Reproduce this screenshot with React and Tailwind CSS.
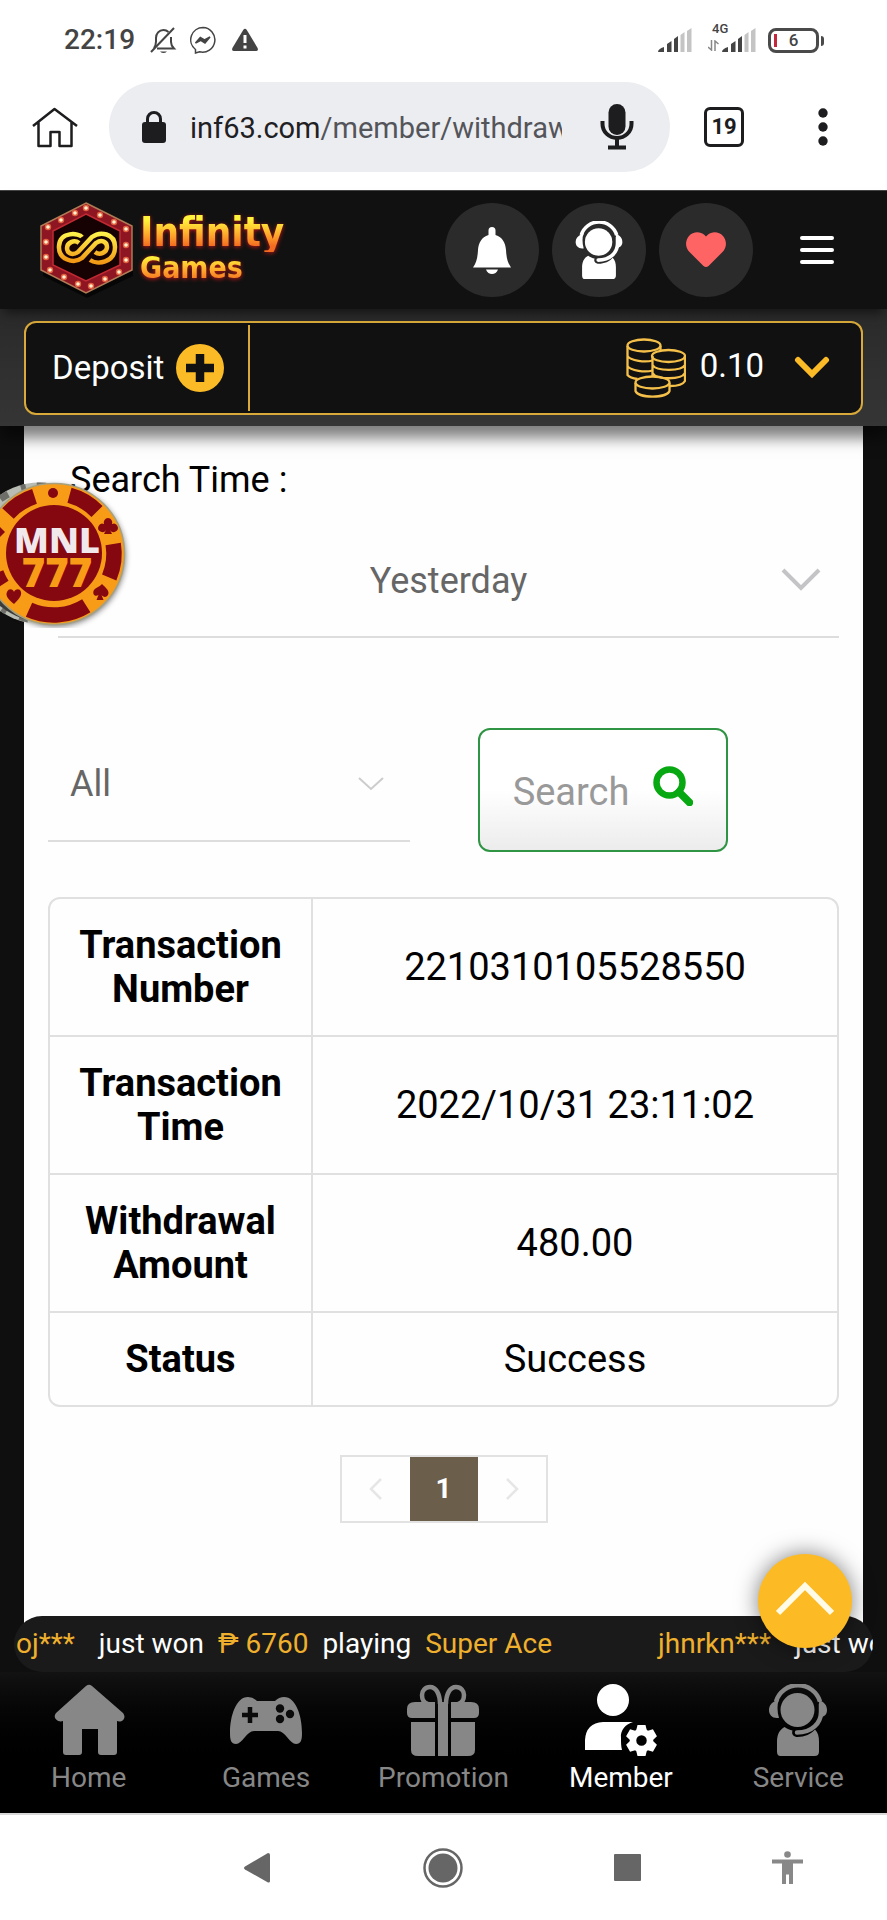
import React from "react";

const transactions = [
  { label: "Transaction Number", value: "2210310105528550" },
  { label: "Transaction Time", value: "2022/10/31 23:11:02" },
  { label: "Withdrawal Amount", value: "480.00" },
  { label: "Status", value: "Success" },
];

function SignalBars() {
  return (
    <svg width="34" height="26" viewBox="0 0 34 26" aria-hidden="true">
      <path d="M0 25q0-3 6-5v5z" fill="#444" />
      <path d="M9 25v-8l4.500-3v11z" fill="#444" />
      <path d="M16 25V12l4-3v16z" fill="#444" />
      <path d="M22.500 25V8l4-3v20z" fill="#c4c4c4" />
      <path d="M29 25V4l4.500-3v24z" fill="#c4c4c4" />
    </svg>
  );
}

function StatusBar() {
  return (
    <div className="flex items-center bg-white pt-5 pr-[68px] pb-4 pl-16 text-[#444]">
      <span className="text-[28px] leading-10 font-medium">22:19</span>
      <svg className="ml-3.5" width="28" height="28" viewBox="0 0 28 28" fill="none" stroke="#444" strokeWidth="2" aria-hidden="true">
        <path d="M5 22c1.500-2 2-4 2-6.500V12c0-4.500 3-8 7.500-8 2 0 3.500.6 5 2M22 11v5c0 2.500 1 4.500 3 6.500H8" />
        <path d="M2 26 25 2" />
        <path d="M11 25.500q3.500 3 7 0z" fill="#444" stroke="none" />
      </svg>
      <svg className="ml-3" width="28" height="28" viewBox="0 0 28 28" fill="none" stroke="#444" strokeWidth="1.500" aria-hidden="true">
        <path d="M14 1.500A12.300 12.300 0 1 1 10.500 25.700L6.500 27v-3.500A12.300 12.300 0 0 1 14 1.500z" />
        <path d="m6.500 17 4.800-5.500 4.200 2.500 5.500-3-5 6-4.200-2.700z" fill="#444" />
      </svg>
      <svg className="ml-3.5" width="28" height="24" viewBox="0 0 28 24" aria-hidden="true">
        <path d="M12.200 2q1.800-2.600 3.600 0l10.800 18q1 3-1.600 3H3q-2.600 0-1.600-3z" fill="#444" />
        <path d="M14 7v8M14 17.500v3" stroke="#fff" strokeWidth="3" />
      </svg>
      <span className="flex-1" />
      <SignalBars />
      <div className="relative ml-[30px]">
        <SignalBars />
        <span className="absolute -top-1.5 -left-2.5 text-[13px] leading-4 font-medium">4G</span>
        <svg className="absolute bottom-0.5 -left-3.5" width="11" height="11" viewBox="0 0 11 11" fill="none" stroke="#888" strokeWidth="1.500" aria-hidden="true">
          <path d="M3.500 0v10L0 7M7 11V1l3.500 3" />
        </svg>
      </div>
      <div className="relative ml-3 flex h-[25px] w-[51px] items-center justify-center rounded-lg border-[3px] border-[#4a4a4a] text-[17px] leading-5 font-medium">
        <span className="absolute top-[3px] left-[3px] h-[13px] w-[3px] bg-[#c4283c]" />
        6
        <span className="absolute top-[5px] -right-2 h-2.5 w-[3px] rounded-r bg-[#4a4a4a]" />
      </div>
    </div>
  );
}

function BrowserBar() {
  return (
    <div className="flex items-center bg-white pt-1.5 pr-[59px] pb-[18px] pl-8">
      <button aria-label="Home page">
        <svg width="46" height="42" viewBox="0 0 46 42" fill="none" stroke="#1d1d1f" strokeWidth="2.500" strokeLinejoin="round" aria-hidden="true">
          <path d="M1 20 22.500 3 45 20M6.500 16v24h12V26h9v14h12V16" />
        </svg>
      </button>
      <div className="ml-[31px] flex h-[90px] min-w-0 flex-1 items-center rounded-full bg-[#ecedf1] pr-9 pl-8">
        <svg className="shrink-0" width="26" height="32" viewBox="0 0 26 32" aria-hidden="true">
          <rect x="1" y="11" width="24" height="21" rx="3" fill="#1d1d1f" />
          <path d="M6.500 12V8a6.500 6.500 0 0 1 13 0v4" fill="none" stroke="#1d1d1f" strokeWidth="3" />
        </svg>
        <div className="ml-[23px] w-0 flex-1 overflow-hidden pt-0.5 text-[29px] leading-10 whitespace-nowrap text-[#54555a]">
          <span className="text-[#1f2023]">inf63.com</span>/member/withdraw
        </div>
        <svg className="ml-[38px] shrink-0" width="34" height="46" viewBox="0 0 34 46" aria-hidden="true">
          <rect x="8.500" y="0" width="17" height="31" rx="8.500" fill="#1d1d1f" />
          <path d="M2.500 17v3a14.500 14 0 0 0 29 0v-3M17 34v9M8 43.500h18" fill="none" stroke="#1d1d1f" strokeWidth="4" />
        </svg>
      </div>
      <button className="ml-[34px] flex size-10 items-center justify-center rounded-md border-[3px] border-[#1d1d1f] text-[22px] leading-6 font-bold text-[#1d1d1f]" aria-label="19 open tabs">
        19
      </button>
      <button className="ml-[74px]" aria-label="Browser menu">
        <svg width="10" height="38" viewBox="0 0 10 38" fill="#1d1d1f" aria-hidden="true">
          <circle cx="5" cy="5" r="4.700" />
          <circle cx="5" cy="19" r="4.700" />
          <circle cx="5" cy="33" r="4.700" />
        </svg>
      </button>
    </div>
  );
}

function HeadsetPerson({ size }) {
  return (
    <svg width={size} height={size} viewBox="0 0 72 72" fill="currentColor" aria-hidden="true">
      <circle cx="35.500" cy="26" r="17" />
      <path d="M14 17.500A23 23 0 0 1 58 17.500" fill="none" stroke="currentColor" strokeWidth="4.500" />
      <path d="M59 20v8c0 11-9 20.500-24 20.500" fill="none" stroke="currentColor" strokeWidth="4.500" strokeLinecap="round" />
      <path d="M17 15q-3 9 0 19h-2c-5 0-8-3.500-8-8s3-7.500 6-9z" />
      <path d="M56 14l3 3c3 1.500 6 4 6 9S62 33 56.500 34q3-10-.5-20z" />
      <path d="M22.500 43c2.500 2 5.500 3 8 3.500-1.500 4 1.500 6.500 5 6.500 7 0 14-3 17.500-7.500 3 3 4 7 4 12v10q0 4.500-4.500 4.500h-34Q15 72 15 67.500V58c0-7 2-12 7.500-15z" />
    </svg>
  );
}

function LogoMark() {
  const bulbs = [
    [46, 6], [60, 13], [74, 20], [86, 27], [86, 43], [86, 58], [79, 70], [65, 77], [51, 84],
    [38, 82], [24, 75], [10, 68], [6, 55], [6, 40], [8, 25], [21, 18], [35, 11],
  ];
  return (
    <svg width="94" height="96" viewBox="0 0 94 96" aria-hidden="true">
      <defs>
        <linearGradient id="mark-gold" x1="0" y1="0" x2="0" y2="1">
          <stop offset="0" stopColor="#fff04a" />
          <stop offset="1" stopColor="#f29a16" />
        </linearGradient>
      </defs>
      <path d="M47 6 93 28v46L47 96 3 74V28z" fill="#000" opacity=".6" />
      <path d="M46 1 92 24v44L46 91 1 68V24z" fill="#8d1622" stroke="#b07b55" strokeWidth="1.500" />
      <path d="M46 12 80 29v34L46 79 13 63V29z" fill="#170203" stroke="#c22a33" strokeWidth="1.500" />
      {bulbs.map(([x, y]) => (
        <g key={`${x}-${y}`}>
          <circle cx={x} cy={y} r="3.200" fill="#e0603f" />
          <circle cx={x} cy={y} r="1.800" fill="#fff3d0" />
        </g>
      ))}
      <g fill="none" stroke="url(#mark-gold)" strokeWidth="4.500">
        <path d="M42 35c-3-4-22-6-23 9-1 14 15 18 23 12l14-15c6-4 11-1 11 4s-7 9-12 5" />
        <path d="M50 58c7 5 25 3 25-13 0-14-15-16-23-10L38 50c-6 4-11 1-11-4s7-9 12-5" />
      </g>
    </svg>
  );
}

function SiteHeader() {
  return (
    <header className="relative z-20 flex items-center border-t border-[#444] bg-[#111] py-[11px] pr-[53px] pl-10 shadow-[0_8px_10px_-4px_rgba(0,0,0,0.5)]">
      <a href="#" className="flex items-center gap-1.5 font-['DejaVu_Sans_Condensed','DejaVu_Sans',sans-serif] font-bold" aria-label="Infinity Games">
        <LogoMark />
        <span className="-mt-1 flex flex-col drop-shadow-[0_1px_2px_#c01818]">
          <span className="bg-linear-to-b from-[#fff23a] from-20% to-[#f36a21] to-85% bg-clip-text text-[40px] leading-10 text-transparent">Infinity</span>
          <span className="bg-linear-to-b from-[#fff23a] from-15% to-[#f36a21] to-90% bg-clip-text text-[30px] leading-8 text-transparent">Games</span>
        </span>
      </a>
      <span className="flex-1" />
      <div className="flex items-center gap-[13px]">
        <button className="flex size-[94px] items-center justify-center rounded-full bg-[#2b2b2b]" aria-label="Notifications">
          <svg width="38" height="47" viewBox="0 0 38 47" fill="#fff" aria-hidden="true">
            <path d="M15.500 3.500a3.500 3.500 0 0 1 7 0V8c7 2 10 8 10.500 15 .5 8 1.500 12.500 5 17.500H0c3.500-5 4.500-9.500 5-17.500C5.500 16 8.500 10 15.500 8zM13 42.500h12c-1 3-3.500 4.500-6 4.500s-5-1.500-6-4.500z" />
          </svg>
        </button>
        <button className="flex size-[94px] items-center justify-center rounded-full bg-[#2b2b2b] text-white" aria-label="Support">
          <HeadsetPerson size={58} />
        </button>
        <button className="flex size-[94px] items-center justify-center rounded-full bg-[#2b2b2b]" aria-label="Favourites">
          <svg width="40" height="36" viewBox="0 0 40 36" fill="#ff6464" aria-hidden="true">
            <path d="M17.500 34 3.500 20C-1 15.500-1 8.500 3 4s11-5 15.500-1L20 4.500 21.500 3C26-1 33-.5 37 4s4 11.500-.5 16l-14 14q-2.500 2-5 0z" />
          </svg>
        </button>
      </div>
      <button className="ml-[47px] flex flex-col gap-2" aria-label="Menu">
        <span className="h-1 w-[34px] rounded-full bg-white" />
        <span className="h-1 w-[34px] rounded-full bg-white" />
        <span className="h-1 w-[34px] rounded-full bg-white" />
      </button>
    </header>
  );
}

function CoinStacks() {
  return (
    <svg width="60" height="60" viewBox="0 0 60 60" fill="none" stroke="#f5c04a" strokeWidth="2.300" aria-hidden="true">
      <ellipse cx="18" cy="7.500" rx="16.500" ry="6" />
      <path d="M1.500 8v29c2 2.500 6 3.500 10 4M1.500 18c3 5 18 6.500 25 4.500M1.500 28c3 5 18 6.500 25 4.500M34.500 8v5" />
      <ellipse cx="42.500" cy="18" rx="16.500" ry="6" />
      <path d="M26.500 18v20M59 18v25c-2 3.500-8 5-15 5M26.500 27c4 6.500 29 6.500 32.500 0M26.500 35c4 7 29 7 32.500 0" />
      <ellipse cx="26.500" cy="44.500" rx="17" ry="6" />
      <path d="M9.500 45v8c3 7.500 31 7.500 34 0v-8" />
    </svg>
  );
}

function BalanceBar() {
  return (
    <section className="relative bg-[#333] bg-linear-to-b from-[#2a2a2a] to-[#353535] px-6 pt-3 pb-[11px] shadow-[0_12px_14px_rgba(0,0,0,0.5)]">
      <div className="flex h-[94px] items-center rounded-xl border-2 border-[#d9a93a] bg-[#111] py-0.5 pr-[31px] pl-[26px]">
        <button className="flex h-full items-center gap-3 border-r-2 border-[#d9a93a] pr-6 text-[33px] leading-10 text-white">
          Deposit
          <svg width="48" height="48" viewBox="0 0 48 48" aria-hidden="true">
            <circle cx="24" cy="24" r="24" fill="#fbbb27" />
            <path d="M24 10v28M10 24h28" stroke="#111" strokeWidth="8.500" />
          </svg>
        </button>
        <span className="flex-1" />
        <CoinStacks />
        <span className="ml-3.5 pb-1 text-[33px] leading-10 text-white">0.10</span>
        <button className="ml-[30px]" aria-label="Show balances">
          <svg width="36" height="24" viewBox="0 0 36 24" fill="none" stroke="#fbbb27" strokeWidth="6" strokeLinecap="round" aria-hidden="true">
            <path d="m4 4 14 14L32 4" />
          </svg>
        </button>
      </div>
    </section>
  );
}

function CasinoChip() {
  return (
    <a href="#" className="absolute top-12 left-0 z-10" aria-label="MNL 777">
      <svg width="134" height="154" viewBox="0 0 134 154" aria-hidden="true">
        <defs>
          <filter id="chip-shadow" x="-20%" y="-20%" width="150%" height="150%">
            <feGaussianBlur stdDeviation="3" />
          </filter>
        </defs>
        <circle cx="55" cy="82" r="70" fill="#000" opacity=".6" filter="url(#chip-shadow)" />
        <circle cx="40" cy="79" r="70.500" fill="#b9bcb2" />
        <circle cx="40" cy="79" r="67" fill="none" stroke="#6e6f69" strokeWidth="7" strokeDasharray="9 14 5 11" />
        <path d="M0 132q22 17 46 16L0 116z" fill="#3b3c3a" />
        <circle cx="54" cy="80" r="70.500" fill="#f89c18" stroke="#a7a07e" strokeWidth="1.500" />
        <g fill="none" stroke="#850710" strokeWidth="15.500">
          <path d="M69.500 21.300A61 61 0 0 1 97 37.500" />
          <path d="M113.200 70A61 61 0 0 1 109.200 103.500" />
          <path d="M86.300 131.700A61 61 0 0 1 29 135.700" />
          <path d="M8 39.500A61 61 0 0 1 34.500 22.300" />
          <path d="M-4 99A61 61 0 0 0 2 111" />
        </g>
        <circle cx="54" cy="79" r="48" fill="#850710" />
        <g fill="#850710">
          <circle cx="53" cy="19" r="5" />
          <path d="M108 44a4.500 4.500 0 0 1 4 6 4.200 4.200 0 1 1-2 6l2 4h-8l2-4a4.200 4.200 0 1 1-2-6 4.500 4.500 0 0 1 4-6z" />
          <path d="M102 110c4 4 8 7 6 11-2 3-5 2-6.500 0l2 5h-7l2-5c-3 2-6 0-5-4 1-3 6-4 8.500-7z" />
          <path d="M14 130c-5-4-9-8-7-12s6-3 7 0c1-3 6-4 7 0s-3 8-7 12z" />
          <path d="M0 53 5 58 0 63z" />
        </g>
        <g fontFamily="Open Sans, Noto Sans, sans-serif" fontWeight="800" textAnchor="middle">
          <text x="57" y="79" fontSize="36" fill="#f1e8ec">MNL</text>
          <text x="57" y="113" fontSize="40" fill="#f89c18">777</text>
        </g>
      </svg>
    </a>
  );
}

function HistoryPanel() {
  return (
    <main className="relative px-6">
      <CasinoChip />
      <div className="bg-[#fefefe] px-6 pt-8 pb-[100px]">
        <label htmlFor="period" className="block pl-[22px] text-[36px] leading-11 text-black">Search Time :</label>
        <div className="relative mt-5 ml-2.5">
          <select id="period" className="block h-[116px] w-full appearance-none border-b-2 border-[#ddd] bg-transparent pt-1 text-center text-[36px] leading-11 text-[#666] [text-align-last:center]" defaultValue="Yesterday">
            <option>Yesterday</option>
            <option>Today</option>
          </select>
          <svg className="pointer-events-none absolute top-[46px] right-[18px]" width="40" height="24" viewBox="0 0 40 24" fill="none" stroke="#c4c4c6" strokeWidth="4" aria-hidden="true">
            <path d="m2 2 18 18L38 2" />
          </svg>
        </div>
        <div className="mt-[90px] flex items-start">
          <div className="relative w-[362px]">
            <select aria-label="Status filter" className="block h-[114px] w-full appearance-none border-b-2 border-[#ddd] bg-transparent pl-[22px] text-[36px] leading-11 text-[#666]" defaultValue="All">
              <option>All</option>
              <option>Success</option>
            </select>
            <svg className="pointer-events-none absolute top-[49px] right-[26px]" width="26" height="14" viewBox="0 0 26 14" fill="none" stroke="#ccc" strokeWidth="2" aria-hidden="true">
              <path d="m1 1 12 11L25 1" />
            </svg>
          </div>
          <button className="ml-[68px] flex h-[124px] w-[250px] items-center justify-center gap-6 rounded-xl border-2 border-[#2f9444] bg-linear-to-b from-white from-50% to-[#ececec] pt-1 text-[38px] leading-11 text-[#999]">
            Search
            <svg className="-mt-3" width="40" height="40" viewBox="0 0 40 40" fill="none" stroke="#08a812" aria-hidden="true">
              <circle cx="16.500" cy="16.500" r="13" strokeWidth="6.500" />
              <path d="m26 26 10.500 10.500" strokeWidth="7.500" strokeLinecap="round" />
            </svg>
          </button>
        </div>
        <div className="mt-[45px] overflow-hidden rounded-xl border-2 border-[#e0e0e0]">
          <table className="w-full table-fixed border-collapse text-center leading-11 text-black">
            <tbody>
              {transactions.map((row) => (
                <tr key={row.label} className="border-t-2 border-[#e0e0e0] first:border-t-0">
                  <th scope="row" className="w-[262px] border-r-2 border-[#e0e0e0] px-6 py-6 text-[38px] font-bold">{row.label}</th>
                  <td className="px-4 py-6 text-[38px]">{row.value}</td>
                </tr>
              ))}
            </tbody>
          </table>
        </div>
        <nav className="mt-12 flex justify-center" aria-label="Pages">
          <div className="flex border-2 border-[#e2e2e2]">
            <button className="flex h-16 w-[68px] items-center justify-center" aria-label="Previous page">
              <svg width="14" height="22" viewBox="0 0 14 22" fill="none" stroke="#e6e6e6" strokeWidth="2.500" aria-hidden="true"><path d="M12 1 2 11l10 10" /></svg>
            </button>
            <button className="h-16 w-[68px] bg-[#6b5f4c] text-[28px] leading-10 font-bold text-white" aria-current="page">1</button>
            <button className="flex h-16 w-[68px] items-center justify-center" aria-label="Next page">
              <svg width="14" height="22" viewBox="0 0 14 22" fill="none" stroke="#e6e6e6" strokeWidth="2.500" aria-hidden="true"><path d="m2 1 10 10L2 21" /></svg>
            </button>
          </div>
        </nav>
      </div>
    </main>
  );
}

function WinTicker() {
  return (
    <div className="relative -mt-[7px] px-3.5">
      <div className="overflow-hidden rounded-full bg-[#1a1a1a]">
        <p className="flex pl-0.5 text-[28px] leading-14 whitespace-nowrap text-white">
          <span className="text-[#efb02e]">oj***</span>
          <span className="ml-6">just won</span>
          <span className="ml-3.5 text-[#efb02e]">₱ 6760</span>
          <span className="ml-3.5">playing</span>
          <span className="ml-3.5 text-[#efb02e]">Super Ace</span>
          <span className="ml-[106px] text-[#efb02e]">jhnrkn***</span>
          <span className="ml-6">just won</span>
        </p>
      </div>
      <button className="absolute -top-[62px] right-[35px] flex size-[94px] items-center justify-center rounded-full bg-[#fcbb25] shadow-[0_0_22px_rgba(0,0,0,0.5)]" aria-label="Back to top">
        <svg className="-mt-1" width="58" height="34" viewBox="0 0 58 34" fill="none" stroke="#fffbe6" strokeWidth="6" aria-hidden="true">
          <path d="M2 31 29 4l27 27" />
        </svg>
      </button>
    </div>
  );
}

function HomeIcon() {
  return (
    <svg width="72" height="72" viewBox="0 0 72 72" fill="currentColor" aria-hidden="true">
      <path d="M33 2q3-2.500 6 0l31 27c4 5-1 10-6 8v31q0 3-3 3H48q-3 0-3-3V45H29v23q0 3-3 3H13q-3 0-3-3V37c-5 2-11-3-7-8z" />
    </svg>
  );
}

function GamepadIcon() {
  return (
    <svg width="72" height="72" viewBox="0 0 72 72" aria-hidden="true">
      <path d="M18 13q5 0 9 4h18q4-4 9-4c12 0 18 19 18 36 0 7-1 11-6 11-6 0-11-13-18-13H24c-7 0-12 13-18 13-5 0-6-4-6-11 0-17 6-36 18-36z" fill="currentColor" />
      <path d="M20 23v16M12 31h16" stroke="#0b0b0b" strokeWidth="4.500" />
      <g fill="#0b0b0b">
        <circle cx="50" cy="24.500" r="4.200" />
        <circle cx="60" cy="30" r="4.200" />
        <circle cx="50" cy="35" r="4.200" />
      </g>
    </svg>
  );
}

function GiftIcon() {
  return (
    <svg width="72" height="72" viewBox="0 0 72 72" fill="currentColor" aria-hidden="true">
      <path d="M8 18h20v16H5q-5 0-5-5v-4q0-7 8-7zM44 18h20q8 0 8 7v4q0 5-5 5H44zM4 38h24v34H11q-7 0-7-6zM44 38h24v28q0 6-7 6H44zM31 18h10v54H31z" />
      <path d="M33 20c0-10-4-17-10-17-5 0-8 4-8 8 0 5 2 8 6 9M39 20c0-10 4-17 10-17 5 0 8 4 8 8 0 5-2 8-6 9" fill="none" stroke="currentColor" strokeWidth="4.500" />
    </svg>
  );
}

function MemberIcon() {
  return (
    <svg width="72" height="72" viewBox="0 0 72 72" aria-hidden="true">
      <circle cx="28" cy="16" r="16" fill="currentColor" />
      <path d="M0 66V56q1-17 18-18h30c-7 2-13 8-12 16 0 5 0 8 1 12z" fill="currentColor" />
      <g transform="translate(56.500 56.500)" fill="currentColor">
        <circle r="8.500" fill="none" stroke="currentColor" strokeWidth="6.500" />
        <path d="M-4-15.500h8l1.500 6h-11zM-4 15.500h8l1.500-6h-11z" />
        <path d="M-4-15.500h8l1.500 6h-11zM-4 15.500h8l1.500-6h-11z" transform="rotate(60)" />
        <path d="M-4-15.500h8l1.500 6h-11zM-4 15.500h8l1.500-6h-11z" transform="rotate(120)" />
      </g>
    </svg>
  );
}

const tabs = [
  { label: "Home", icon: <HomeIcon /> },
  { label: "Games", icon: <GamepadIcon /> },
  { label: "Promotion", icon: <GiftIcon /> },
  { label: "Member", icon: <MemberIcon />, active: true },
  { label: "Service", icon: <HeadsetPerson size={72} /> },
];

function TabBar() {
  return (
    <nav className="grid grid-cols-5 bg-linear-to-b from-[#121212] to-black to-80% pt-3 pb-[17px]" aria-label="Main">
      {tabs.map((tab) => (
        <a
          key={tab.label}
          href="#"
          aria-current={tab.active ? "page" : undefined}
          className={tab.active ? "flex flex-col items-center text-white" : "flex flex-col items-center text-[#878787]"}
        >
          {tab.icon}
          <span className="mt-1 text-[28px] leading-9">{tab.label}</span>
        </a>
      ))}
    </nav>
  );
}

function SystemNav() {
  return (
    <div className="flex flex-1 items-center border-t-2 border-[#d8d8d8] bg-white pr-[84px] pl-[243px]">
      <button aria-label="Back">
        <svg width="28" height="30" viewBox="0 0 28 30" fill="#666" aria-hidden="true"><path d="M25 0q2 0 2 2v26q0 2-2 1.500L2 16.500q-2-1.500 0-3z" /></svg>
      </button>
      <button className="ml-[152px]" aria-label="Home screen">
        <svg width="40" height="40" viewBox="0 0 40 40" aria-hidden="true">
          <circle cx="20" cy="20" r="18.500" fill="none" stroke="#666" strokeWidth="2.500" />
          <circle cx="20" cy="20" r="14.500" fill="#666" />
        </svg>
      </button>
      <button className="ml-[151px]" aria-label="Recent apps">
        <svg width="27" height="27" viewBox="0 0 27 27" aria-hidden="true"><rect width="27" height="27" rx="1" fill="#666" /></svg>
      </button>
      <button className="ml-auto" aria-label="Accessibility">
        <svg width="31" height="33" viewBox="0 0 31 33" fill="#888" aria-hidden="true">
          <circle cx="15.500" cy="3.500" r="3.300" />
          <path d="M0 8.500h31v4H21V33h-4v-9.500h-3V33h-4V12.500H0z" />
        </svg>
      </button>
    </div>
  );
}

export default function App() {
  return (
    <div className="flex min-h-screen flex-col overflow-x-hidden bg-[#0f0f0f] font-[Roboto,sans-serif]">
      <StatusBar />
      <BrowserBar />
      <SiteHeader />
      <div className="relative">
        <div className="relative z-10"><BalanceBar /></div>
        <HistoryPanel />
      </div>
      <WinTicker />
      <TabBar />
      <SystemNav />
    </div>
  );
}
